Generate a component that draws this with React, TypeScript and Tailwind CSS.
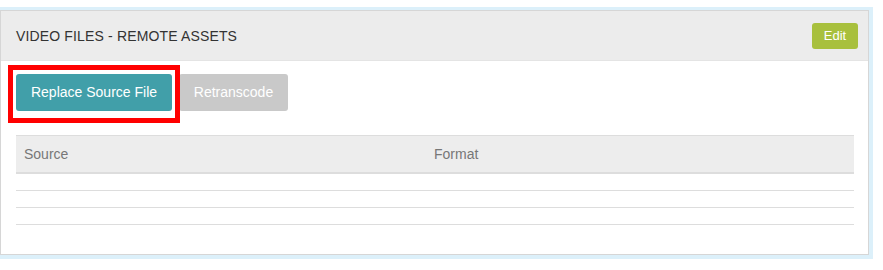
export default function App() {
  const rows = [0, 1, 2];

  return (
    <div className="w-[883px] h-[270px] bg-white pt-[7px] font-['Liberation_Sans',Arial,sans-serif]">
      <div className="w-[873px] bg-[#dcf0fa] pt-[3px] pr-[4px] pb-[4px]">
        <div className="relative border border-[#d6d6d6] bg-white h-[245px]">
          {/* Header */}
          <div className="h-[50px] bg-[#ececec] border-b border-[#e4e4e4] flex items-center justify-between pl-[15px] pr-[10px]">
            <h3 className="text-[14px] tracking-[0.15px] text-[#333] leading-none">VIDEO FILES - REMOTE ASSETS</h3>
            <button className="w-[46px] h-[26px] rounded-[3px] bg-[#a8c03d] text-white text-[13px] leading-none">
              Edit
            </button>
          </div>

          {/* Body */}
          <div className="px-[15px] pt-[13px]">
            <div className="flex gap-[7px]">
              <button className="w-[156px] h-[37px] rounded-[3px] bg-[#419fa9] text-white text-[14px]">
                Replace Source File
              </button>
              <button className="w-[109px] h-[37px] rounded-[3px] bg-[#c9c9c9] text-white text-[14px]">
                Retranscode
              </button>
            </div>

            <div className="mt-[24px] w-[838px]">
              <div className="grid grid-cols-[410px_1fr] h-[39px] items-center bg-[#ededed] border-t border-[#dddddd] border-b-2 border-b-[#dddddd] text-[14px] text-[#777]">
                <div className="pl-[8px]">Source</div>
                <div className="pl-[8px]">Format</div>
              </div>
              {rows.map((r) => (
                <div key={r} className="h-[17px] border-b border-[#dddddd]" />
              ))}
            </div>
          </div>

          {/* Highlight annotation */}
          <div className="absolute left-[7px] top-[54px] w-[172px] h-[58px] border-[5px] border-[#ff0000]" />
        </div>
      </div>
    </div>
  );
}
